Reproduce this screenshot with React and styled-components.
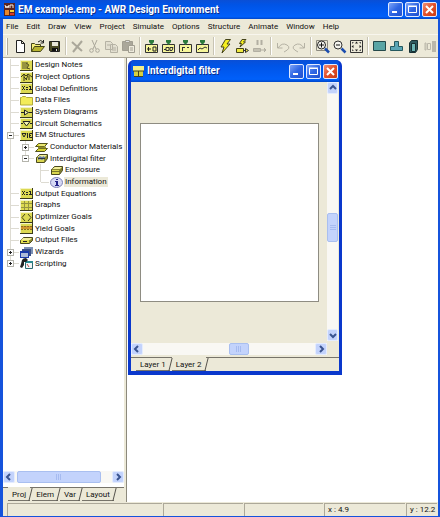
import React, { useState } from "react";
import styled, { createGlobalStyle, css } from "styled-components";

const GlobalStyle = createGlobalStyle`
  * { box-sizing: border-box; }
  body {
    margin: 0;
    font-family: Roboto, "Liberation Sans", sans-serif;
    font-size: 8px;
    color: #111;
  }
  button {
    padding: 0;
    border: none;
    background: none;
    font: inherit;
    color: inherit;
  }
  svg { display: block; flex: none; }
`;

const Frame = styled.div`
  min-height: 100vh;
  display: flex;
  flex-direction: column;
  background: #ece9d8;
  border: solid #1553dc;
  border-width: 0 2px 1px 3px;
`;

const TitleBar = styled.header`
  display: flex;
  align-items: center;
  gap: 3px;
  height: ${p => (p.$child ? 22 : 19)}px;
  margin: 0 ${p => (p.$child ? 0 : -2)}px 0 ${p => (p.$child ? 0 : -3)}px;
  padding: 0 ${p => (p.$child ? 1 : 3)}px 0 ${p => (p.$child ? 2 : 4)}px;
  background: linear-gradient(#0a4fd6, #0054e6 25%, #005cf5 70%, #0060fa 88%, #0046c8);
`;

const Title = styled.h1`
  flex: 1;
  margin: 0;
  font-size: 10px;
  line-height: 18px;
  font-weight: bold;
  color: #fff;
  white-space: nowrap;
  text-shadow: 1px 1px #0b2f8c;
`;

const WindowButtons = styled.div`
  display: flex;
  gap: 2px;
`;

const WindowButton = styled.button`
  width: 15px;
  height: 15px;
  border: 1px solid #dfe9ff;
  border-radius: 2px;
  background: ${p =>
    p.$close
      ? "linear-gradient(135deg, #f09078, #e2502a 50%, #c83c14)"
      : "linear-gradient(135deg, #7ea4f8, #2f66e4 50%, #2150cc)"};
`;

const MenuBar = styled.nav`
  display: flex;
  gap: 8px;
  height: 15px;
  padding: 0 3px;
`;

const MenuItem = styled.button`
  line-height: 13px;
`;

const ToolBar = styled.div`
  display: flex;
  align-items: center;
  height: 24px;
  padding-left: 3px;
  border-top: 1px solid #f8f6ee;
  border-bottom: 1px solid #aca899;
  overflow: hidden;
`;

const Grip = styled.span`
  width: 2px;
  height: 17px;
  margin-right: 4px;
  border-left: 1px solid #fff;
  border-right: 1px solid #b0ac9c;
`;

const ToolSeparator = styled.span`
  flex: none;
  width: 2px;
  height: 18px;
  margin: 0 2px;
  border-left: 1px solid #c8c4b4;
  border-right: 1px solid #fff;
`;

const ToolButton = styled.button`
  flex: none;
  display: flex;
  justify-content: center;
  width: 17px;
`;

const Body = styled.main`
  flex: 1;
  display: flex;
  background: #fff;
`;

const SidePanel = styled.aside`
  flex: none;
  width: 124px;
  display: flex;
  flex-direction: column;
  padding-right: 2px;
  border-right: 1px solid #8c897c;
  box-shadow: inset -2px 0 #ece9d8;
`;

const Tree = styled.ul`
  flex: 1;
  display: grid;
  grid-auto-rows: 12px 12px 11px;
  align-content: start;
  margin: 1px 0 0 5px;
  padding: 0;
  list-style: none;
`;

const TreeRow = styled.li`
  position: relative;
  display: flex;
  align-items: center;
  padding-left: ${p => p.$level * 15}px;
  white-space: nowrap;
`;

// guides running down the left of each level
const Guide = styled.span`
  position: absolute;
  left: ${p => p.$level * 15 + 2}px;
  top: 0;
  height: ${p => (p.$last ? "50%" : "100%")};
  border-left: 1px solid #dddbd2;
`;

const Branch = styled.span`
  position: relative;
  flex: none;
  display: flex;
  align-items: center;
  width: 12px;
  height: 7px;
  &::before {
    content: "";
    position: absolute;
    left: 3px;
    right: 1px;
    top: 3px;
    border-top: 1px solid #dddbd2;
  }
`;

const Expander = styled.button`
  position: relative;
  width: 7px;
  height: 7px;
  margin-left: -1px;
  border: 1px solid #b4b4ac;
  background: #fff;
`;

const TreeLabel = styled.span`
  margin-left: 1px;
  padding: 0 1px;
  line-height: 10px;
  ${p => p.$selected && css`background: #ece9d8;`}
`;

const TreeScroll = styled.div`
  margin-bottom: 4px;
`;

const ScrollBar = styled.div`
  flex: none;
  display: flex;
  flex-direction: ${p => (p.$vertical ? "column" : "row")};
  ${p => (p.$vertical ? "width: 11px;" : "height: 12px;")}
  background: #f9f8f4;
`;

const ScrollArrow = styled.button`
  flex: none;
  display: flex;
  align-items: center;
  justify-content: center;
  width: ${p => (p.$vertical ? 11 : 12)}px;
  height: 12px;
  border: 1px solid #e4ecff;
  border-radius: 2px;
  background: #c3d3fc;
`;

const ScrollTrack = styled.div`
  flex: ${p => p.$grow};
`;

const Thumb = styled.div`
  flex: none;
  display: flex;
  align-items: center;
  justify-content: center;
  ${p => (p.$vertical ? "height" : "width")}: ${p => p.$size}px;
  border: 1px solid #a9bff0;
  border-radius: 2px;
  background: #c3d3fc;
`;

const TabStrip = styled.div`
  flex: none;
  display: flex;
  height: ${p => (p.$child ? 14 : 15)}px;
  padding-left: 5px;
  border-top: 1px solid #77746a;
  background: #ece9d8;
`;

const TabButton = styled.button`
  position: relative;
  height: 13px;
  margin-right: 2px;
  padding: 0 4px;
  line-height: 13px;
  border-bottom: 1px solid #77746a;
  ${p => p.$selected && css`box-shadow: 0 -1px #ece9d8;`}
  &::after {
    content: "";
    position: absolute;
    right: -1px;
    top: 0;
    height: 13px;
    border-right: 1px solid #55534c;
    transform: skewX(-14deg);
  }
`;

const Desktop = styled.section`
  position: relative;
  flex: 1;
`;

const ChildWindow = styled.article`
  position: absolute;
  left: 1px;
  top: 2px;
  width: 214px;
  height: 315px;
  display: flex;
  flex-direction: column;
  border: solid #0a38cc;
  border-width: 0 3px 4px 3px;
  border-radius: 6px 6px 0 0;
  background: #0a38cc;
  & > header { border-radius: 4px 4px 0 0; }
`;

const ChildBody = styled.div`
  flex: 1;
  display: grid;
  grid-template-columns: 1fr 12px;
  grid-template-rows: 1fr 14px;
  row-gap: 2px;
  background: #ece9d8;
`;

const Sheet = styled.div`
  padding: 41px 8px 39px 9px;
  display: flex;
`;

const Paper = styled.div`
  flex: 1;
  border: 1px solid #8e8c82;
  background: #fff;
`;

const StatusBar = styled.footer`
  display: flex;
  height: 14px;
  padding: 1px 0 0 4px;
  line-height: 12px;
  white-space: nowrap;
`;

const StatusCell = styled.span`
  flex: ${p => (p.$width ? `0 0 ${p.$width}px` : 1)};
  margin-right: 1px;
  padding-left: 3px;
  overflow: hidden;
  border: solid #aca899;
  border-width: 1px 0 0 1px;
`;

const menus = ["File", "Edit", "Draw", "View", "Project", "Simulate", "Options", "Structure", "Animate", "Window", "Help"];

// toolbar drawings, all on a 15 x 15 grid
const toolIcons = {
  new: <path d="M3.5 1.5h5l3 3v9h-8z M8.5 1.5v3h3" fill="#fff" stroke="#222" />,
  open: (
    <>
      <path d="M1.5 12.5v-8h3l1 1h5v2" fill="#f4ee7a" stroke="#444418" />
      <path d="M1.5 12.5l3-5h10l-4 5z" fill="#b8b430" stroke="#444418" />
      <path d="M8 3q3-3 5 0M13.5 1v3h-3" fill="none" stroke="#222" />
    </>
  ),
  save: (
    <>
      <path d="M2.5 2.5h10v10h-9l-1-1z" fill="#4c4b26" stroke="#222" />
      <path d="M5 3h6v4H5z" fill="#e8e6d8" />
      <path d="M5 9h6v3H5z" fill="#111" />
      <path d="M9 10h1v2H9z" fill="#ddd" />
    </>
  ),
  delete: <path d="M2 3l10 9M12 2L3 13" fill="none" stroke="#aaa79a" strokeWidth="2" />,
  cut: (
    <g fill="none" stroke="#aaa79a">
      <path d="M5 1l4 9M10 1L6 10" />
      <circle cx="4.5" cy="11.5" r="1.8" />
      <circle cx="10.5" cy="11.5" r="1.8" />
    </g>
  ),
  copy: (
    <g fill="#e2dfd0" stroke="#b5b2a4">
      <path d="M1.5 2.5h5l2 2v6h-7zM6.5 5.500h5l2 2v6h-7zM3 6h3M8 9h4M8 11h4" />
    </g>
  ),
  paste: (
    <g stroke="#a19e91">
      <path d="M1.5 2.5h10v9h-10z" fill="#aaa79a" />
      <path d="M4.5 1.5h4v2h-4z" fill="#ddd" />
      <path d="M7.5 6.5h6v7h-6zM9 9h3M9 11h3" fill="#eeebdd" />
    </g>
  ),
  schematic: <path d="M4.500 8v4M3 10h4M9 8h3v4H9z" fill="none" stroke="#222" />,
  system: <path d="M3 10.500h2M5 8.500h3v3H5zM9 8.500h3l-1 3H9z" fill="none" stroke="#333" />,
  layout: <path d="M4 8.500h3M4.500 8v4M9 8.500h2" fill="none" stroke="#333" />,
  graph: <path d="M3 11l2-2 2 1 3-2 2 1" fill="none" stroke="#333" />,
  bolt: <path d="M7.500.500h5L9 5h3L4 14l2-6H3z" fill="#f4ee20" stroke="#44431a" />,
  boltRun: (
    <>
      <path d="M7 .500h4L8.500 3h2L5 8l1.500-3.500H4.500z" fill="#f4ee20" stroke="#44431a" />
      <path d="M1.500 9.500h7v4h-7z" fill="#f0ea40" stroke="#44431a" />
      <path d="M8 11.500h3M10.500 9.500l3 2-3 2z" fill="#f0ea40" stroke="#333" />
    </>
  ),
  pause: (
    <g stroke="#b2afa2" fill="#c4c1b2">
      <path d="M5.500 1v5M9.500 1v5" strokeWidth="2" />
      <path d="M1.500 9.500h7v3h-7zM9 11h5M12 9l2 2-2 2" />
    </g>
  ),
  undo: <path d="M2.500 4v5h5M3 9q4-6 9-3t-3 7" fill="none" stroke="#b5b2a4" />,
  redo: <path d="M12.500 4v5h-5M12 9q-4-6-9-3t3 7" fill="none" stroke="#b5b2a4" />,
  zoomIn: (
    <>
      <path d="M1.500 1.500h11v10h-11z" fill="none" stroke="#8d8b80" />
      <circle cx="6.500" cy="6" r="4" fill="#f4f4ee" stroke="#222" />
      <path d="M4 6h5M6.500 3.500v5" stroke="#111" />
      <path d="M10 9.500l4 4" stroke="#1b4cae" strokeWidth="2.500" />
    </>
  ),
  zoomOut: (
    <>
      <circle cx="6" cy="6" r="4" fill="#f4f4ee" stroke="#333" />
      <path d="M4 6h4" stroke="#111" />
      <path d="M9.500 9.500l4 4" stroke="#1b4cae" strokeWidth="2.500" />
    </>
  ),
  fit: (
    <>
      <path d="M1.500 1.500h12v12h-12z" fill="#ece9d8" stroke="#333" />
      <path d="M6 4.500l1.500-2 1.500 2zM6 10.500l1.500 2 1.500-2zM4.500 6l-2 1.500 2 1.500zM10.500 6l2 1.500-2 1.500z" fill="#222" />
      <path d="M3 3h2L3 5zM12 3h-2l2 2zM3 12h2l-2-2zM12 12h-2l2-2z" fill="#555" />
    </>
  ),
  rect: <path d="M1.500 2.500h12v9h-12z" fill="#5aa5a5" stroke="#24484a" />,
  tee: <path d="M5.500 2.500h4v5h4v4h-12v-4h4z" fill="#5aa5b5" stroke="#24585e" />,
  via: (
    <>
      <path d="M3.500 4l2-2.500h6v9l-2 3h-6z" fill="#2d5a60" stroke="#173034" />
      <path d="M5.500 4.500h4v8h-4z" fill="#6bb5b5" stroke="#173034" />
    </>
  ),
  port: (
    <>
      <path d="M2 4h1v7H2zM4.500 4.500h3v6h-3z" fill="none" stroke="#bab7aa" />
      <path d="M9 2h4v11H9z" fill="#bab7aa" />
    </>
  )
};

const addIcons = ["schematic", "system", "layout", "graph"];

const tools = [
  ["new", "open", "save"],
  ["delete", "cut", "copy", "paste"],
  addIcons,
  ["bolt", "boltRun", "pause"],
  ["undo", "redo"],
  ["zoomIn", "zoomOut", "fit"],
  ["rect", "tee", "via", "port"]
];

const ToolIcon = ({ name }) => (
  <svg width="15" height="15" viewBox="0 0 15 15">
    {addIcons.includes(name) && (
      <>
        <path d="M1.5 5.5h12v8h-12z" fill="#f6f69a" stroke="#333" />
        <path d="M5 1h5v2L7.500 6 5 3z" fill="#2c7a3c" />
      </>
    )}
    {toolIcons[name]}
  </svg>
);

const tile = (
  <>
    <path d="M0 0h13v11H0z" fill="#3a3a1c" />
    <path d="M0 0h12v10H0z" fill="#f4f3c4" />
    <path d="M1 1h11v9H1z" fill="#dcd952" />
  </>
);

const box = (
  <>
    <path d="M1.500 4.500l3-3h8v4l-3 4h-8z" fill="#8a8830" stroke="#4a4920" />
    <path d="M2 4l3-2h7l-2 2z" fill="#f2ef9a" />
    <path d="M2 5h7v4H2z" fill="#d9d650" />
  </>
);

// tree drawings, on a 13 x 11 grid
const treeIcons = {
  notes: <>{tile}<path d="M2 2h6v7H2z" fill="#96943f" /><path d="M6 3l3 2-2 3 3 1" fill="none" stroke="#55541f" /></>,
  options: <>{tile}<path d="M1 5l3-3 2 2 2-2 4 3M4 3v6M4 5l3 3M8 3L6 8M9 4v4" fill="none" stroke="#3a3918" /></>,
  equation: (
    <>
      {tile}
      <path d="M2 3h1v1h1V3h1v1H4v2h1v1H4V6H3v1H2V6h1V4H2zM6 4h2v1H6zM6 6h2v1H6zM9 3h2v3h1v1H9V6h1V4H9z" fill="#222" />
    </>
  ),
  folder: <path d="M.5 10V2.5h1l1-1h3l1 1h6v7.500z" fill="#f3ec58" stroke="#b0aa3e" />,
  system: <>{tile}<path d="M1 5.500h3M4.500 3l4 2.500-4 2.500zM9 5.500h3" fill="#f6f4b0" stroke="#222" /></>,
  circuit: <>{tile}<path d="M1 5.500h2M10 5.500h2M3 3.500h7L6.500 8z" fill="#f6f4b0" stroke="#222" /></>,
  em: <>{tile}<path d="M2 3.500h4L4 7zM7.500 3v5M12 3.500H9.500v4H12M9 5.500h2" fill="none" stroke="#222" /></>,
  conductor: (
    <>
      <path d="M3.500 1.500h9l-3 3h-9zM3.500 6.500h9l-3 3h-9z" fill="#d6d330" stroke="#55541f" />
      <path d="M3 5.500h8" stroke="#8f8d28" strokeWidth="2" />
      <path d="M4 3h6" stroke="#fbf9b8" />
    </>
  ),
  filter: (
    <>
      {box}
      <path d="M3 5l2-2 2 1 2-1 1 2-3 2-2-1-2 1z" fill="#6b7fa8" />
      <path d="M3 5.500h7" stroke="#2b3442" />
    </>
  ),
  enclosure: <>{box}<path d="M2 6.500h8l2-3" fill="none" stroke="#77752a" /></>,
  info: (
    <>
      <ellipse cx="6.500" cy="5.500" rx="6" ry="5" fill="#d5d8f4" stroke="#7d80b4" />
      <path d="M6 2h2v1H6zM5 4h3v4h1v1H5V8h1V5H5z" fill="#22228a" />
    </>
  ),
  graphs: <>{tile}<path d="M1 3.500h11M1 7.500h11M4.500 1v9M8.500 1v9" stroke="#96943f" /></>,
  optimizer: <>{tile}<path d="M5 2L2 5.500 5 9M8 2l3 3.500L8 9" fill="none" stroke="#44431c" /></>,
  yield: <>{tile}<path d="M1 3h11v3H1z" fill="#d0962e" /><path d="M1 3.500h11M1 6.500h11" stroke="#8c6a20" strokeDasharray="2 1" /></>,
  files: (
    <>
      <path d="M.500 5.500l3-3h9v3l-3 3h-9z" fill="#8a8830" stroke="#4a4920" />
      <path d="M1 5l2-2h9l-2 2z" fill="#f2ef9a" />
      <path d="M1 5h8v3H1z" fill="#e2df50" />
      <path d="M3 6.500h4" stroke="#222" />
    </>
  ),
  wizards: (
    <>
      <path d="M4 0h9v7H4z" fill="#7c90b4" />
      <path d="M2 2h9v7H2z" fill="#3a4f88" />
      <path d="M0 4h9v7H0z" fill="#1b3aa8" />
      <path d="M1 6h7v4H1z" fill="#aebcd8" />
    </>
  ),
  scripting: (
    <>
      <path d="M5.500 3.500h7v7h-7z" fill="#f2f6f6" stroke="#2c6a70" />
      <path d="M5 3h8v2H5z" fill="#2c8a90" />
      <path d="M2 2q1-2 4-2l2 2-2 2H4v3l-2 3-2-1 1-3z" fill="#222" />
      <path d="M7 6l2 3" stroke="#c04040" />
    </>
  )
};

const treeItems = [
  { label: "Design Notes", icon: "notes", level: 0 },
  { label: "Project Options", icon: "options", level: 0 },
  { label: "Global Definitions", icon: "equation", level: 0 },
  { label: "Data Files", icon: "folder", level: 0 },
  { label: "System Diagrams", icon: "system", level: 0 },
  { label: "Circuit Schematics", icon: "circuit", level: 0 },
  { label: "EM Structures", icon: "em", level: 0, toggle: "minus" },
  { label: "Conductor Materials", icon: "conductor", level: 1, toggle: "plus" },
  { label: "Interdigital filter", icon: "filter", level: 1, toggle: "minus", last: true },
  { label: "Enclosure", icon: "enclosure", level: 2 },
  { label: "Information", icon: "info", level: 2, last: true },
  { label: "Output Equations", icon: "equation", level: 0 },
  { label: "Graphs", icon: "graphs", level: 0 },
  { label: "Optimizer Goals", icon: "optimizer", level: 0 },
  { label: "Yield Goals", icon: "yield", level: 0 },
  { label: "Output Files", icon: "files", level: 0 },
  { label: "Wizards", icon: "wizards", level: 0, toggle: "plus" },
  { label: "Scripting", icon: "scripting", level: 0, toggle: "plus", last: true }
];

const arrows = {
  left: "M5 1L2 4l3 3",
  right: "M3 1l3 3-3 3",
  up: "M1 5l3-3 3 3",
  down: "M1 3l3 3 3-3"
};

const Arrow = ({ dir, vertical }) => (
  <ScrollArrow $vertical={vertical} aria-label={`Scroll ${dir}`}>
    <svg width="8" height="8" viewBox="0 0 8 8">
      <path d={arrows[dir]} fill="none" stroke="#3a5490" strokeWidth="2" />
    </svg>
  </ScrollArrow>
);

const Scroller = ({ vertical, size, before, after }) => (
  <ScrollBar $vertical={vertical}>
    <Arrow dir={vertical ? "up" : "left"} vertical={vertical} />
    <ScrollTrack $grow={before} />
    <Thumb $vertical={vertical} $size={size}>
      <svg width="6" height="6" viewBox="0 0 6 6">
        <path d={vertical ? "M0 .5h6M0 2.500h6M0 4.500h6" : "M.5 0v6M2.500 0v6M4.500 0v6"} stroke="#a6bbf0" />
      </svg>
    </Thumb>
    <ScrollTrack $grow={after} />
    <Arrow dir={vertical ? "down" : "right"} vertical={vertical} />
  </ScrollBar>
);

const Controls = () => (
  <WindowButtons>
    <WindowButton aria-label="Minimize">
      <svg width="13" height="13" viewBox="0 0 13 13"><path d="M3 8h5v2H3z" fill="#fff" /></svg>
    </WindowButton>
    <WindowButton aria-label="Maximize">
      <svg width="13" height="13" viewBox="0 0 13 13">
        <path d="M2.500 3.500h8v6h-8zM2 3h9" fill="none" stroke="#fff" />
      </svg>
    </WindowButton>
    <WindowButton $close aria-label="Close">
      <svg width="13" height="13" viewBox="0 0 13 13">
        <path d="M3 3l7 7M10 3l-7 7" stroke="#fff" strokeWidth="2" />
      </svg>
    </WindowButton>
  </WindowButtons>
);

const Tabs = ({ names, initial, child }) => {
  const [active, setActive] = useState(initial);

  return (
    <TabStrip $child={child} role="tablist">
      {names.map(name => (
        <TabButton
          key={name}
          role="tab"
          aria-selected={name === active}
          $selected={name === active}
          onClick={() => setActive(name)}
        >
          {name}
        </TabButton>
      ))}
    </TabStrip>
  );
};

const App = () => {
  const [selected, setSelected] = useState("Information");

  const renderTree = () => {
    return treeItems.map(({ label, icon, level, toggle, last }) => (
      <TreeRow key={label} $level={level} onClick={() => setSelected(label)}>
        {level > 0 && <Guide $level={0} />}
        <Guide $level={level} $last={last} />
        <Branch>
          {toggle && (
            <Expander aria-label={`Toggle ${label}`}>
              <svg width="5" height="5" viewBox="0 0 5 5">
                <path d={toggle === "plus" ? "M1 2.500h3M2.500 1v3" : "M1 2.500h3"} stroke="#222" />
              </svg>
            </Expander>
          )}
        </Branch>
        <svg width="13" height="11" viewBox="0 0 13 11">{treeIcons[icon]}</svg>
        <TreeLabel $selected={label === selected}>{label}</TreeLabel>
      </TreeRow>
    ));
  };

  return (
    <Frame>
      <GlobalStyle />
      <TitleBar>
        <svg width="11" height="13" viewBox="0 0 11 13">
          <path d="M0 0h11v13H0z" fill="#5a2420" />
          <path d="M1 2l1 3 1-2 1 2 1-3M6 5V2h3v3" fill="none" stroke="#f4ece4" />
          <path d="M1 7h4v5H1z" fill="#e8882a" />
          <path d="M6 7h4v2H6z" fill="#f6d23a" />
          <path d="M6 10h4v2H6z" fill="#d83a28" />
        </svg>
        <Title>EM example.emp - AWR Design Environment</Title>
        <Controls />
      </TitleBar>

      <MenuBar>
        {menus.map(name => <MenuItem key={name}>{name}</MenuItem>)}
      </MenuBar>

      <ToolBar>
        <Grip />
        {tools.map((group, i) => (
          <React.Fragment key={i}>
            {i > 0 && <ToolSeparator />}
            {group.map(name => (
              <ToolButton key={name} aria-label={name}><ToolIcon name={name} /></ToolButton>
            ))}
          </React.Fragment>
        ))}
      </ToolBar>

      <Body>
        <SidePanel>
          <Tree>{renderTree()}</Tree>
          <TreeScroll>
            <Scroller size={84} before={1} after={6} />
          </TreeScroll>
          <Tabs names={["Proj", "Elem", "Var", "Layout"]} initial="Proj" />
        </SidePanel>

        <Desktop>
          <ChildWindow>
            <TitleBar $child>
              <svg width="11" height="11" viewBox="0 0 11 11">
                <path d="M0 0h11v5H0z" fill="#f2ee8a" />
                <path d="M1 5h9v6H1z" fill="#d6d040" />
                <path d="M0 5h11M5.500 5v6M1 10.500h9" stroke="#44431c" />
              </svg>
              <Title as="h2">Interdigital filter</Title>
              <Controls />
            </TitleBar>
            <ChildBody>
              <Sheet><Paper /></Sheet>
              <Scroller vertical size={29} before={118} after={86} />
              <Scroller size={20} before={86} after={66} />
            </ChildBody>
            <Tabs child names={["Layer 1", "Layer 2"]} initial="Layer 2" />
          </ChildWindow>
        </Desktop>
      </Body>

      <StatusBar>
        <StatusCell $width={155} />
        <StatusCell $width={80} />
        <StatusCell />
        <StatusCell $width={81}>x : 4.9</StatusCell>
        <StatusCell $width={31}>y : 12.2</StatusCell>
      </StatusBar>
    </Frame>
  );
};

export default App;
